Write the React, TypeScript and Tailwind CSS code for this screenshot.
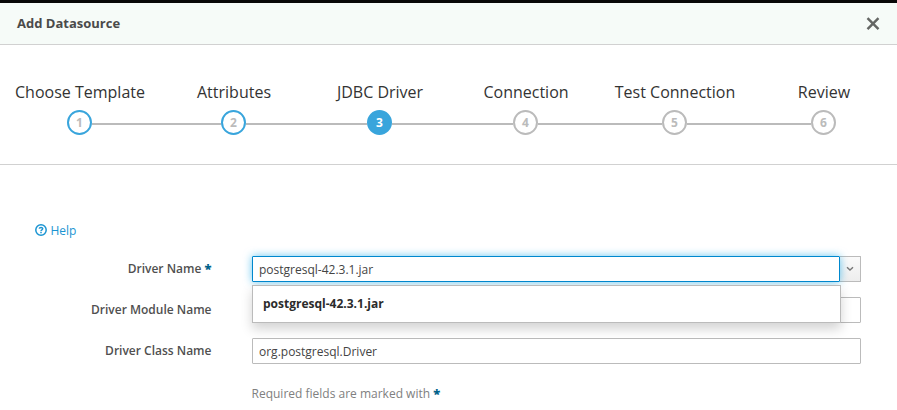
import React from "react";

type StepState = "done" | "active" | "todo";

const steps: { label: string; state: StepState }[] = [
  { label: "Choose Template", state: "done" },
  { label: "Attributes", state: "done" },
  { label: "JDBC Driver", state: "active" },
  { label: "Connection", state: "todo" },
  { label: "Test Connection", state: "todo" },
  { label: "Review", state: "todo" },
];

const circleStyles: Record<StepState, string> = {
  done: "border-[#39a5dc] bg-white text-[#bbbbbb]",
  active: "border-[#39a5dc] bg-[#39a5dc] text-white",
  todo: "border-[#bbbbbb] bg-white text-[#bbbbbb]",
};

function Step({ index, label, state }: { index: number; label: string; state: StepState }) {
  return (
    <li className="flex flex-col">
      <span className="pl-px text-center text-[16px] leading-[26px] whitespace-nowrap text-[#333333]">{label}</span>
      <div className="mt-[5px] flex items-center">
        <span className={`mt-[3px] h-0.5 flex-1 ${index === 0 ? "bg-transparent" : "bg-[#bbbbbb]"}`} />
        <span
          className={`flex size-[25px] items-center justify-center rounded-full border-2 text-[12px] leading-none font-bold ${circleStyles[state]}`}
        >
          {index + 1}
        </span>
        <span className={`mt-[3px] h-0.5 flex-1 ${index === 5 ? "bg-transparent" : "bg-[#bbbbbb]"}`} />
      </div>
    </li>
  );
}

function Required() {
  return <span className="text-[13px] leading-none font-extrabold text-[#00618a]">*</span>;
}

function FieldRow({ label, required, children }: { label: string; required?: boolean; children: React.ReactNode }) {
  return (
    <div className="flex h-[26px]">
      <label className="w-[211.5px] text-right text-[12px] leading-[26px] font-semibold text-[#505050]">
        {label}
        {required && <> <Required /></>}
      </label>
      <div className="ml-[40.5px] flex w-[609px]">{children}</div>
    </div>
  );
}

const inputStyle =
  "h-[26px] min-w-0 flex-1 rounded-[1px] border border-[#bbbbbb] bg-white px-1.5 pt-px text-[12px] text-[#444444] outline-none";

export default function App() {
  return (
    <div className="h-[410px] w-[897px] overflow-hidden bg-white font-['Open_Sans','Liberation_Sans',sans-serif]">
      <div className="h-[3px] bg-[#080808]" />
      <header className="flex h-[42px] items-center justify-between border-b border-[#d1d1d1] bg-[#f6fbf8] px-[17px]">
        <h4 className="-mt-px pb-px text-[13px] leading-5 font-bold text-[#4a4a4a]">Add Datasource</h4>
        <button aria-label="Close" className="mt-px">
          <svg width="14" height="14" viewBox="0 0 14 14" stroke="#646664" strokeWidth="2.4" fill="none">
            <path d="M1.5 1.2 12.5 12.2M12.5 1.2 1.5 12.2" />
          </svg>
        </button>
      </header>
      <ol className="grid h-[120px] grid-cols-[159px_149px_143px_149px_149px_149px] overflow-hidden border-b border-[#d1d1d1] pt-[34px]">
        {steps.map((s, i) => (
          <Step key={s.label} index={i} label={s.label} state={s.state} />
        ))}
      </ol>
      <main className="pt-[56px]">
        <a className="flex h-5 items-center gap-1 pl-[35px] text-[12px] text-[#1a94d2]">
          <svg className="-mt-0.5" width="12" height="12" viewBox="0 0 12 12" fill="none" stroke="#1a94d2">
            <circle cx="6" cy="6" r="5.2" strokeWidth="1.5" />
            <path d="M4.2 4.7C4.5 3.1 7.8 3.1 7.7 4.8C7.6 5.9 6 5.7 6 7.1M6 7.8V9.2" strokeWidth="1.5" />
          </svg>
          <span className="-ml-[0.5px]">Help</span>
        </a>
        <form className="mt-[15px] flex flex-col gap-[15px]">
          <FieldRow label="Driver Name" required>
            <div className="relative flex w-[588px]">
              <input
                className="h-[26px] w-full rounded-[1px] border border-[#0088ce] bg-white px-1.5 pt-px text-[12px] text-[#444444] shadow-[0_0_8px_rgba(0,160,230,0.6)] outline-none"
                defaultValue="postgresql-42.3.1.jar"
              />
              <ul className="absolute top-[29px] left-0 z-10 flex h-[38px] w-[589px] items-center border border-[#bbbbbb] bg-white pl-[10px] text-[12px] font-bold text-[#2b2b2b] shadow-[0_6px_12px_rgba(0,0,0,0.175)]">
                <li>postgresql-42.3.1.jar</li>
              </ul>
            </div>
            <span className="flex h-[26px] w-[21px] items-center justify-center rounded-r-[1px] border border-l-0 border-[#bbbbbb] bg-linear-to-b from-[#fafafa] to-[#ededed]">
              <svg width="8" height="6" viewBox="0 0 8 6" fill="none" stroke="#777777" strokeWidth="1.4">
                <path d="M1 1.2 4 4 7 1.2" />
              </svg>
            </span>
          </FieldRow>
          <FieldRow label="Driver Module Name">
            <input className={inputStyle} />
          </FieldRow>
          <FieldRow label="Driver Class Name">
            <input className={inputStyle} defaultValue="org.postgresql.Driver" />
          </FieldRow>
        </form>
        <p className="mt-[20px] pl-[251.5px] text-[12px] leading-5 text-[#808080]">
          Required fields are marked with <Required />
        </p>
      </main>
    </div>
  );
}
